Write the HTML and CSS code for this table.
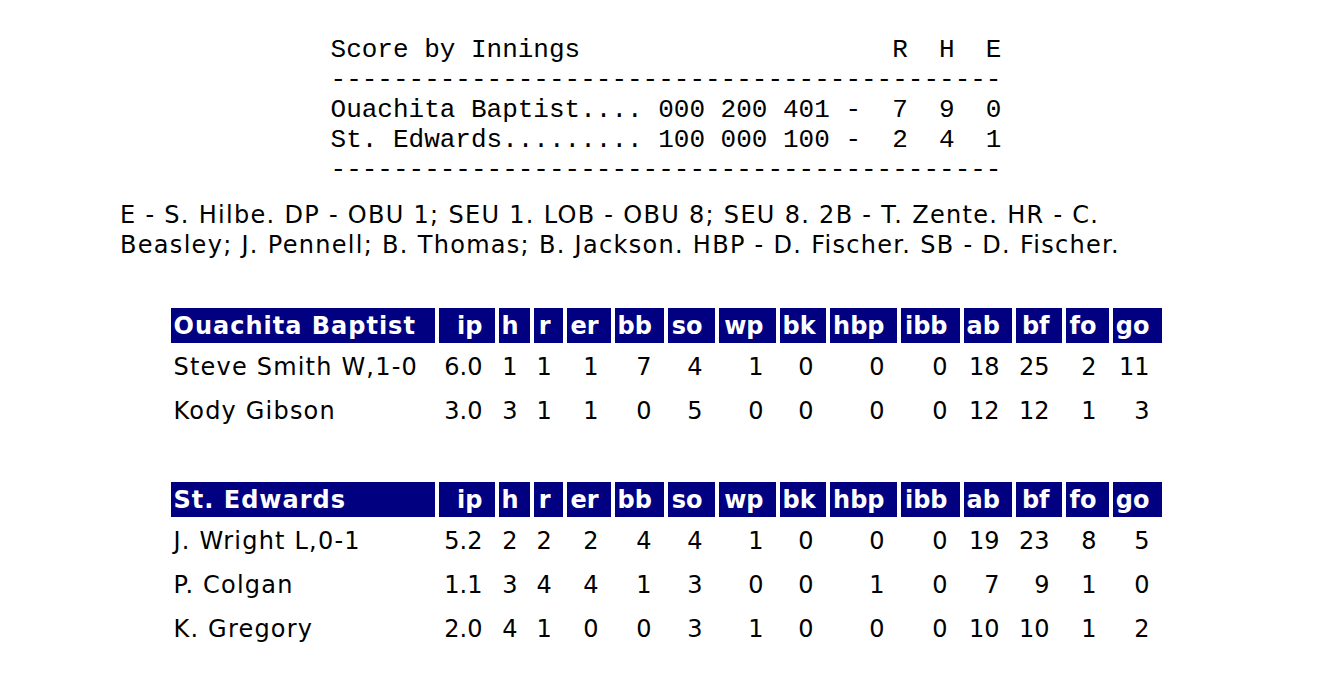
FILE: index.html
```html
<!DOCTYPE html>
<html lang="en">
<head>
<meta charset="utf-8">
<title>Box Score</title>
<link rel="stylesheet" href="styles.css">
</head>
<body>
<div class="page">
<pre class="linescore">Score by Innings                    R  H  E
-------------------------------------------
Ouachita Baptist.... 000 200 401 -  7  9  0
St. Edwards......... 100 000 100 -  2  4  1
-------------------------------------------</pre>

<p class="notes">E - S. Hilbe. DP - OBU 1; SEU 1. LOB - OBU 8; SEU 8. 2B - T. Zente. HR - C. Beasley; J. Pennell; B. Thomas; B. Jackson. HBP - D. Fischer. SB - D. Fischer.</p>

<table class="pitching first">
  <colgroup>
    <col class="c-name"><col class="c-ip"><col class="c-h"><col class="c-r"><col class="c-er"><col class="c-bb"><col class="c-so"><col class="c-wp"><col class="c-bk"><col class="c-hbp"><col class="c-ibb"><col class="c-ab"><col class="c-bf"><col class="c-fo"><col class="c-go">
  </colgroup>
  <thead>
    <tr><th class="team">Ouachita Baptist</th><th>ip</th><th>h</th><th>r</th><th>er</th><th>bb</th><th>so</th><th>wp</th><th>bk</th><th>hbp</th><th>ibb</th><th>ab</th><th>bf</th><th>fo</th><th>go</th></tr>
  </thead>
  <tbody>
    <tr><td class="player">Steve Smith W,1-0</td><td>6.0</td><td>1</td><td>1</td><td>1</td><td>7</td><td>4</td><td>1</td><td>0</td><td>0</td><td>0</td><td>18</td><td>25</td><td>2</td><td>11</td></tr>
    <tr><td class="player">Kody Gibson</td><td>3.0</td><td>3</td><td>1</td><td>1</td><td>0</td><td>5</td><td>0</td><td>0</td><td>0</td><td>0</td><td>12</td><td>12</td><td>1</td><td>3</td></tr>
  </tbody>
</table>

<table class="pitching second">
  <colgroup>
    <col class="c-name"><col class="c-ip"><col class="c-h"><col class="c-r"><col class="c-er"><col class="c-bb"><col class="c-so"><col class="c-wp"><col class="c-bk"><col class="c-hbp"><col class="c-ibb"><col class="c-ab"><col class="c-bf"><col class="c-fo"><col class="c-go">
  </colgroup>
  <thead>
    <tr><th class="team">St. Edwards</th><th>ip</th><th>h</th><th>r</th><th>er</th><th>bb</th><th>so</th><th>wp</th><th>bk</th><th>hbp</th><th>ibb</th><th>ab</th><th>bf</th><th>fo</th><th>go</th></tr>
  </thead>
  <tbody>
    <tr><td class="player">J. Wright L,0-1</td><td>5.2</td><td>2</td><td>2</td><td>2</td><td>4</td><td>4</td><td>1</td><td>0</td><td>0</td><td>0</td><td>19</td><td>23</td><td>8</td><td>5</td></tr>
    <tr><td class="player">P. Colgan</td><td>1.1</td><td>3</td><td>4</td><td>4</td><td>1</td><td>3</td><td>0</td><td>0</td><td>1</td><td>0</td><td>7</td><td>9</td><td>1</td><td>0</td></tr>
    <tr><td class="player">K. Gregory</td><td>2.0</td><td>4</td><td>1</td><td>0</td><td>0</td><td>3</td><td>1</td><td>0</td><td>0</td><td>0</td><td>10</td><td>10</td><td>1</td><td>2</td></tr>
  </tbody>
</table>
</div>
</body>
</html>
```

FILE: styles.css
```css
html, body {
  margin: 0;
  padding: 0;
  background: #ffffff;
}

body {
  font-family: "DejaVu Sans", Verdana, sans-serif;
  color: #000000;
}

.page {
  padding-top: 35px;
}

.linescore {
  font-family: "Liberation Mono", "Courier New", monospace;
  font-size: 26px;
  line-height: 30px;
  margin: 0 auto;
  width: max-content;
  color: #000000;
}

.notes {
  width: 1050px;
  margin: 15px 0 0 120px;
  font-size: 24px;
  line-height: 30px;
  letter-spacing: 1.3px;
}

.pitching {
  table-layout: fixed;
  width: 999px;
  border-collapse: separate;
  border-spacing: 4px;
  margin: 44px auto 0;
  font-size: 24px;
}

.pitching.second {
  margin-top: 43px;
}

.c-name { width: 264px; }
.c-ip { width: 56px; }
.c-h { width: 31px; }
.c-r { width: 29px; }
.c-er { width: 44px; }
.c-bb { width: 49px; }
.c-so { width: 47px; }
.c-wp { width: 57px; }
.c-bk { width: 46px; }
.c-hbp { width: 67px; }
.c-ibb { width: 59px; }
.c-ab { width: 48px; }
.c-bf { width: 46px; }
.c-fo { width: 43px; }
.c-go { width: 49px; }

.pitching th {
  background: #000080;
  color: #ffffff;
  font-weight: bold;
  height: 35px;
  padding: 0 12px 0 3px;
  text-align: right;
  vertical-align: middle;
  white-space: nowrap;
}

.pitching td {
  height: 40px;
  padding: 0 12px 0 3px;
  text-align: right;
  vertical-align: middle;
  white-space: nowrap;
}

.pitching th.team,
.pitching td.player {
  text-align: left;
}

.pitching th.team {
  letter-spacing: 1px;
}

.pitching td.player {
  letter-spacing: 1.2px;
}
```
